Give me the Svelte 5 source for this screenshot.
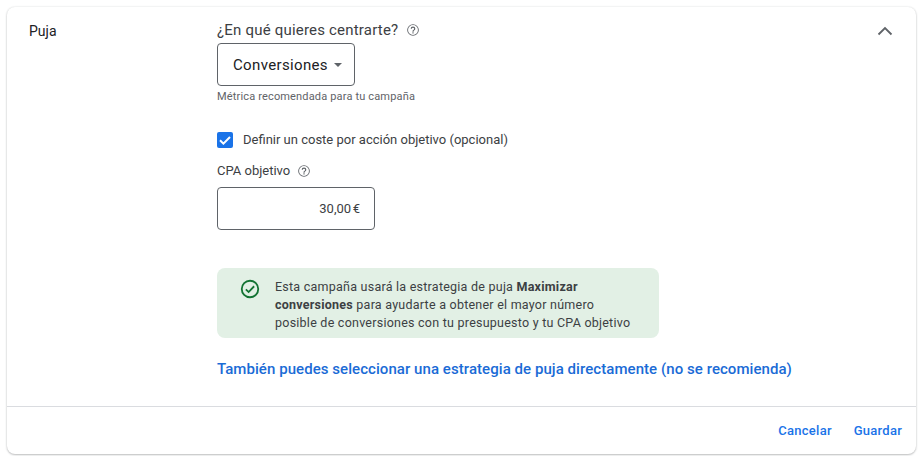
<script lang="ts">
  let checked = $state(true);
</script>

<div class="page">
  <section class="card">
    <div class="body">
      <div class="label">Puja</div>
      <div class="content">
        <div class="title">
          <span>¿En qué quieres centrarte?</span>
          <svg class="help" viewBox="0 0 24 24" width="14" height="14" fill="#5f6368"><path d="M12 2a10 10 0 1 0 0 20 10 10 0 0 0 0-20zm0 18.500a8.500 8.500 0 1 1 0-17 8.500 8.500 0 0 1 0 17zM11 16h2v2h-2zm1-10a4 4 0 0 0-4 4h2a2 2 0 1 1 4 0c0 2-3 1.800-3 5h2c0-2.200 3-2.500 3-5a4 4 0 0 0-4-4z"/></svg>
        </div>
        <div class="select">
          <span>Conversiones</span>
          <span class="caret"></span>
        </div>
        <div class="hint">Métrica recomendada para tu campaña</div>

        <label class="check">
          <span class="box" class:on={checked}>
            <svg viewBox="0 0 16 16" width="16" height="16"><path d="M3 8.300l3.400 3.400L13 5" fill="none" stroke="#fff" stroke-width="2"/></svg>
          </span>
          <span>Definir un coste por acción objetivo (opcional)</span>
        </label>

        <div class="cpa-label">
          <span>CPA objetivo</span>
          <svg class="help" viewBox="0 0 24 24" width="14" height="14" fill="#5f6368"><path d="M12 2a10 10 0 1 0 0 20 10 10 0 0 0 0-20zm0 18.500a8.500 8.500 0 1 1 0-17 8.500 8.500 0 0 1 0 17zM11 16h2v2h-2zm1-10a4 4 0 0 0-4 4h2a2 2 0 1 1 4 0c0 2-3 1.800-3 5h2c0-2.200 3-2.500 3-5a4 4 0 0 0-4-4z"/></svg>
        </div>
        <div class="amount">30,00&#8239;€</div>

        <div class="notice">
          <svg viewBox="0 0 24 24" width="22" height="22" fill="none" stroke="#137333" stroke-width="2"><circle cx="12" cy="12" r="9"/><path d="M7.500 12.300l3 3 6-6.300"/></svg>
          <p>Esta campaña usará la estrategia de puja <b>Maximizar conversiones</b> para ayudarte a obtener el mayor número posible de conversiones con tu presupuesto y tu CPA objetivo</p>
        </div>

        <a class="direct" href="#direct">También puedes seleccionar una estrategia de puja directamente (no se recomienda)</a>
      </div>
      <svg class="chevron" viewBox="0 0 16 10" width="16" height="10" fill="none" stroke="#5f6368" stroke-width="1.800"><path d="M1.500 8.500L8 2l6.500 6.500"/></svg>
    </div>
    <footer>
      <button>Cancelar</button>
      <button>Guardar</button>
    </footer>
  </section>
</div>

<style>
  :global(body) {
    margin: 0;
    background: #fff;
  }
  .page {
    padding: 7px 2px 2px 7px;
    font-family: Roboto, "Liberation Sans", sans-serif;
    color: #3c4043;
  }
  .card {
    background: #fff;
    border-radius: 8px;
    box-shadow: 0 1px 2px rgba(60, 64, 67, 0.3), 0 0 2px rgba(60, 64, 67, 0.15);
    height: 447px;
    display: flex;
    flex-direction: column;
  }
  .body {
    flex: 1;
    display: flex;
    padding: 14px 23px 0 22px;
    border-bottom: 1px solid #dadce0;
  }
  .label {
    width: 188px;
    font-size: 14px;
    line-height: 20px;
    color: #202124;
  }
  .content {
    flex: 1;
  }
  .title {
    display: flex;
    align-items: center;
    gap: 8px;
    font-size: 15px;
    line-height: 18px;
    color: #3c4043;
    letter-spacing: 0.2px;
  }
  .select {
    margin-top: 4px;
    box-sizing: border-box;
    width: 138px;
    height: 43px;
    border: 1px solid #5f6368;
    border-radius: 4px;
    display: flex;
    align-items: center;
    gap: 6px;
    padding-left: 15px;
    font-size: 15px;
    letter-spacing: 0.35px;
    color: #202124;
  }
  .caret {
    border-left: 4.500px solid transparent;
    border-right: 4.500px solid transparent;
    border-top: 4.500px solid #5f6368;
  }
  .hint {
    margin-top: 3px;
    font-size: 11px;
    line-height: 16px;
    letter-spacing: 0.16px;
    color: #5f6368;
  }
  .check {
    margin-top: 26px;
    display: flex;
    align-items: center;
    gap: 10px;
    font-size: 13px;
    line-height: 18px;
  }
  .box {
    width: 16px;
    height: 16px;
    border-radius: 2px;
    background: #1a73e8;
    display: flex;
  }
  .cpa-label {
    margin-top: 13px;
    display: flex;
    align-items: center;
    gap: 7px;
    font-size: 13px;
    line-height: 18px;
  }
  .amount {
    margin-top: 7px;
    box-sizing: border-box;
    width: 158px;
    height: 43px;
    border: 1px solid #5f6368;
    border-radius: 4px;
    display: flex;
    align-items: center;
    justify-content: flex-end;
    padding-right: 14px;
    font-size: 13px;
  }
  .notice {
    margin-top: 38px;
    box-sizing: border-box;
    width: 442px;
    height: 70px;
    background: #e2f0e5;
    border-radius: 8px;
    display: flex;
    align-items: flex-start;
    gap: 14px;
    padding: 10px 0 0 22px;
  }
  .notice p {
    margin: 0;
    width: 360px;
    font-size: 12.500px;
    line-height: 18px;
    letter-spacing: 0.24px;
  }
  .direct {
    display: block;
    margin-top: 21px;
    font-size: 15px;
    line-height: 20px;
    font-weight: 500;
    letter-spacing: 0.06px;
    color: #1a6bd6;
    text-decoration: none;
  }
  .chevron {
    margin-top: 5px;
  }
  footer {
    height: 47px;
    display: flex;
    justify-content: flex-end;
    align-items: center;
    gap: 22px;
    padding-right: 14px;
  }
  button {
    border: 0;
    background: none;
    padding: 0;
    font: 500 13px/16px Roboto, sans-serif;
    letter-spacing: 0.25px;
    color: #1a73e8;
  }
</style>
